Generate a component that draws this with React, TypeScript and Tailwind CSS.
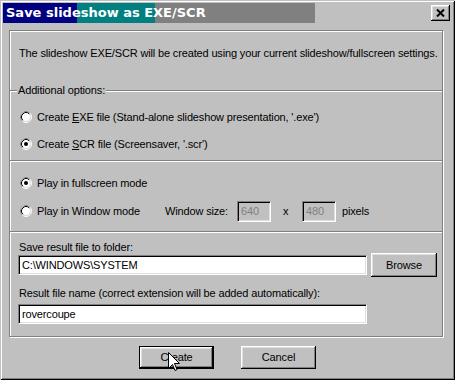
import React from "react";

const F = { fontFamily: '"Liberation Sans", Arial, sans-serif', letterSpacing: "-0.15px" };

function Radio({ checked }: { checked?: boolean }) {
  return (
    <svg width="12" height="12" viewBox="0 0 12 12" className="shrink-0">
      <circle cx="6" cy="6" r="5.5" fill="none" stroke="#ffffff" />
      <path d="M2.11 9.89 A5.5 5.5 0 0 1 9.89 2.11" fill="none" stroke="#808080" />
      <circle cx="6" cy="6" r="4.5" fill="#ffffff" stroke="#dfdfdf" />
      <path d="M2.82 9.18 A4.5 4.5 0 0 1 9.18 2.82" fill="none" stroke="#000000" />
      {checked && <circle cx="6" cy="6" r="2" fill="#000000" />}
    </svg>
  );
}

function RadioRow({ checked, children, className = "" }: { checked?: boolean; children: React.ReactNode; className?: string }) {
  return (
    <div className={"flex items-center " + className}>
      <Radio checked={checked} />
      <span className="ml-[5px] text-[11px] leading-[13px] text-black whitespace-nowrap">{children}</span>
    </div>
  );
}

const sunken =
  "border-t border-l border-t-[#808080] border-l-[#808080] border-b border-r border-b-white border-r-white shadow-[inset_1px_1px_0_#000,inset_-1px_-1px_0_#dfdfdf]";
const raised =
  "shadow-[inset_-1px_-1px_0_#000,inset_1px_1px_0_#fff,inset_-2px_-2px_0_#808080,inset_2px_2px_0_#dfdfdf]";

function Sep() {
  return <div className="h-[2px] border-t border-[#808080] bg-white" />;
}

export default function App() {
  return (
    <div
      style={F}
      className="w-[455px] h-[380px] bg-[#c0c0c0] p-[3px] flex flex-col shadow-[inset_1px_1px_0_#c0c0c0,inset_-1px_-1px_0_#000,inset_2px_2px_0_#fff,inset_-2px_-2px_0_#808080] relative select-none"
    >
      {/* Title bar */}
      <div className="h-[20px] flex items-center bg-[linear-gradient(to_right,#000080_0_74px,#008080_74px_152px,#808080_152px_312px,transparent_312px)]">
        <span
          className="pl-[3px] text-white font-bold text-[13px] leading-[20px] whitespace-nowrap"
          style={{ fontFamily: '"DejaVu Sans", Verdana, sans-serif', letterSpacing: "0px" }}
        >
          Save slideshow as EXE/SCR
        </span>
        <div className="flex-1" />
        <div className={"w-[19px] h-[16px] mr-[2px] bg-[#c0c0c0] flex items-center justify-center " + raised}>
          <svg width="9" height="8" viewBox="0 0 9 8">
            <path d="M1 0.5 L8 7.5 M8 0.5 L1 7.5" stroke="#000" strokeWidth="2" />
          </svg>
        </div>
      </div>

      {/* Group box */}
      <div className="mt-[7px] ml-[6px] w-[434px] h-[307px] border border-[#808080] shadow-[1px_1px_0_#fff,inset_1px_1px_0_#fff] flex flex-col">
        {/* Section 1 */}
        <div className="h-[53px] pt-[16px] pl-[9px] text-[11px] leading-[13px] text-black whitespace-nowrap">
          The slideshow EXE/SCR will be created using your current slideshow/fullscreen settings.
        </div>
        {/* Labeled separator */}
        <div className="h-[13px] flex items-start">
          <div className="w-[7px] mt-[6px] h-[2px] border-t border-[#808080] bg-white" />
          <span className="px-[1px] text-[11px] leading-[13px] text-black whitespace-nowrap">Additional options:</span>
          <div className="flex-1 mt-[6px] h-[2px] border-t border-[#808080] bg-white" />
        </div>
        {/* Section 2 */}
        <div className="h-[63px] pl-[10px] pt-[11px] flex flex-col">
          <RadioRow className="h-[18px]">
            Create <span className="underline">E</span>XE file (Stand-alone slideshow presentation, '.exe')
          </RadioRow>
          <RadioRow className="h-[18px] mt-[9px]" checked>
            Create <span className="underline">S</span>CR file (Screensaver, '.scr')
          </RadioRow>
        </div>
        <Sep />
        {/* Section 3 */}
        <div className="h-[69px] pl-[10px] pt-[10px] flex flex-col">
          <RadioRow className="h-[22px]" checked>
            Play in fullscreen mode
          </RadioRow>
          <div className="h-[22px] mt-[6px] flex items-center text-[11px] leading-[13px] text-black whitespace-nowrap">
            <Radio />
            <span className="ml-[5px] w-[128px]">Play in Window mode</span>
            <span className="w-[72px]">Window size:</span>
            <div className={"w-[34px] h-[21px] bg-[#c0c0c0] text-[#808080] pl-[3px] leading-[19px] " + sunken}>640</div>
            <span className="w-[31px] pl-[12px]">x</span>
            <div className={"w-[34px] h-[21px] bg-[#c0c0c0] text-[#808080] pl-[3px] leading-[19px] " + sunken}>480</div>
            <span className="ml-[6px]">pixels</span>
          </div>
        </div>
        <Sep />
        {/* Section 4 */}
        <div className="h-[103px] pl-[8px] pt-[8px] flex flex-col text-[11px] text-black whitespace-nowrap">
          <div className="h-[12px] leading-[12px] pl-[1px]">Save result file to folder:</div>
          <div className="h-[24px] flex items-center">
            <div className={"w-[349px] h-[20px] bg-white pl-[3px] leading-[18px] " + sunken}>C:\WINDOWS\SYSTEM</div>
            <div className={"ml-[4px] w-[66px] h-[24px] bg-[#c0c0c0] flex items-center justify-center " + raised}>Browse</div>
          </div>
          <div className="h-[12px] leading-[12px] mt-[10px] pl-[1px]">Result file name (correct extension will be added automatically):</div>
          <div className={"mt-[5px] w-[349px] h-[20px] bg-white pl-[3px] leading-[18px] " + sunken}>rovercoupe</div>
        </div>
      </div>

      {/* Buttons */}
      <div className="mt-[9px] flex justify-center gap-[27px] text-[11px] text-black">
        <div className="w-[75px] h-[23px] border border-black">
          <div className={"w-full h-full bg-[#c0c0c0] flex items-center justify-center " + raised}>Create</div>
        </div>
        <div className={"w-[75px] h-[23px] bg-[#c0c0c0] flex items-center justify-center " + raised}>Cancel</div>
      </div>

      {/* Mouse cursor */}
      <svg className="absolute left-[168px] top-[352px]" width="12" height="20" viewBox="0 0 12 20">
        <path
          d="M0.5 0.5 L0.5 16.5 L4.5 12.5 L7 18.5 L9 17.5 L6.5 11.5 L11.5 11.5 Z"
          fill="#fff"
          stroke="#000"
          strokeWidth="1"
        />
      </svg>
    </div>
  );
}
